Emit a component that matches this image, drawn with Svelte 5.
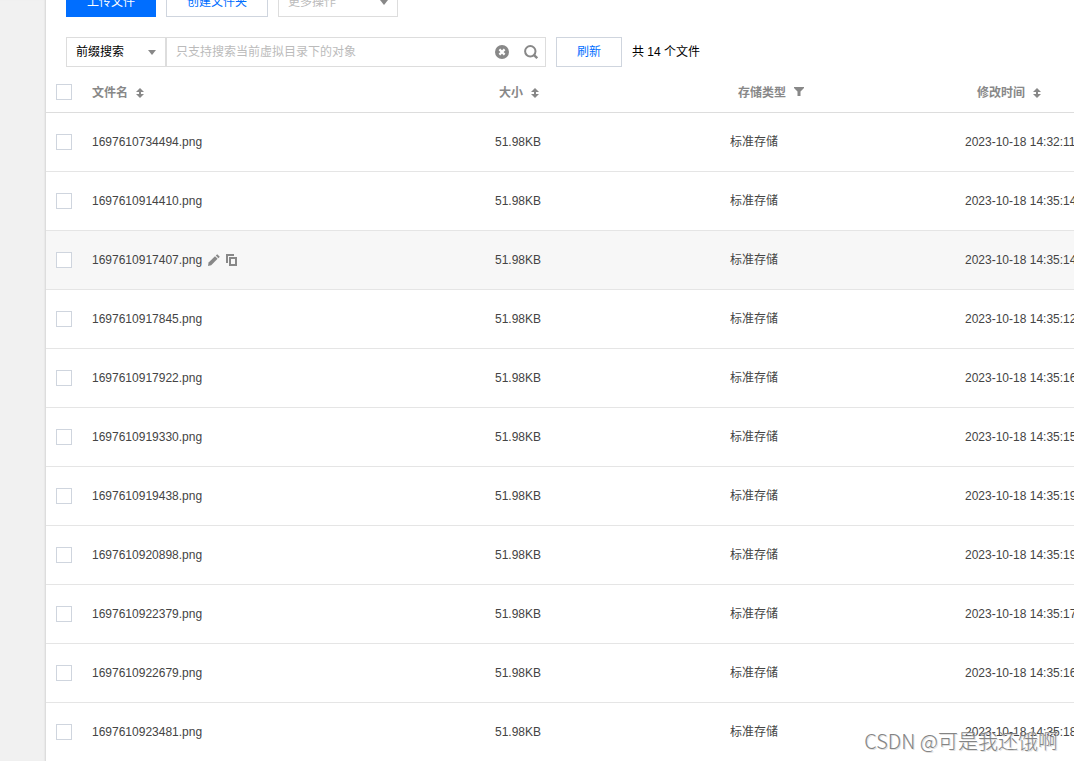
<script>
	let mode = $state("prefix");
	let keyword = $state("");

	const total = 14;
	const hovered = "1697610917407.png";

	const headers = [
		{ title: "文件名", icon: "sort" },
		{ title: "大小", icon: "sort" },
		{ title: "存储类型", icon: "filter" },
		{ title: "修改时间", icon: "sort" },
	];

	const files = [
		{ name: "1697610734494.png", time: "2023-10-18 14:32:11" },
		{ name: "1697610914410.png", time: "2023-10-18 14:35:14" },
		{ name: "1697610917407.png", time: "2023-10-18 14:35:14" },
		{ name: "1697610917845.png", time: "2023-10-18 14:35:12" },
		{ name: "1697610917922.png", time: "2023-10-18 14:35:16" },
		{ name: "1697610919330.png", time: "2023-10-18 14:35:15" },
		{ name: "1697610919438.png", time: "2023-10-18 14:35:19" },
		{ name: "1697610920898.png", time: "2023-10-18 14:35:19" },
		{ name: "1697610922379.png", time: "2023-10-18 14:35:17" },
		{ name: "1697610922679.png", time: "2023-10-18 14:35:16" },
		{ name: "1697610923481.png", time: "2023-10-18 14:35:18" },
	].map((f) => ({ ...f, size: "51.98KB", type: "标准存储" }));
</script>

{#snippet caret()}
	<svg class="caret" width="8" height="5" viewBox="0 0 8 5" aria-hidden="true">
		<path d="M0 0h8L4 5z" fill="#888" />
	</svg>
{/snippet}

{#snippet columns()}
	<colgroup>
		<col class="col-check" />
		<col />
		<col class="col-data" />
		<col class="col-data" />
		<col class="col-data" />
	</colgroup>
{/snippet}

<div class="page">
	<aside></aside>
	<main>
		<div class="actions">
			<button class="btn primary">上传文件</button>
			<button class="btn create">创建文件夹</button>
			<div class="select more">
				<select aria-label="更多操作" disabled>
					<option>更多操作</option>
				</select>
				{@render caret()}
			</div>
		</div>

		<div class="search">
			<div class="select">
				<select aria-label="搜索方式" bind:value={mode}>
					<option value="prefix">前缀搜索</option>
				</select>
				{@render caret()}
			</div>
			<div class="search-box">
				<input
					type="text"
					aria-label="搜索"
					placeholder="只支持搜索当前虚拟目录下的对象"
					bind:value={keyword}
				/>
				<button class="icon-btn" aria-label="清除" onclick={() => (keyword = "")}>
					<svg width="14" height="14" viewBox="0 0 14 14">
						<circle cx="7" cy="7" r="7" fill="#888" />
						<path d="M4.4 4.4l5.2 5.2M9.6 4.4L4.4 9.6" stroke="#fff" stroke-width="2.2" />
					</svg>
				</button>
				<button class="icon-btn" aria-label="搜索">
					<svg width="14" height="14" viewBox="0 0 14 14" fill="none" stroke="#888" stroke-width="2">
						<circle cx="6.3" cy="6.3" r="5.2" />
						<path d="M9.6 9.6l3.6 3.6" stroke-width="2.4" />
					</svg>
				</button>
			</div>
			<button class="btn refresh">刷新</button>
			<span class="total">共 {total} 个文件</span>
		</div>

		<table class="head">
			{@render columns()}
			<thead>
				<tr>
					<th class="check"><input type="checkbox" aria-label="全选" /></th>
					{#each headers as header}
						<th scope="col">
							<span class="cell">
								{header.title}
								{#if header.icon === "sort"}
									<svg width="8" height="10" viewBox="0 0 8 10" fill="#888" aria-hidden="true">
										<path d="M4 0l4 4H5v2h3L4 10 0 6h3V4H0z" />
									</svg>
								{:else}
									<svg class="filter" width="10" height="9" viewBox="0 0 10 9" fill="#888" aria-hidden="true">
										<path d="M0 0h10v1L6.5 4.5V9h-3V4.5L0 1z" />
									</svg>
								{/if}
							</span>
						</th>
					{/each}
				</tr>
			</thead>
		</table>

		<table>
			{@render columns()}
			<tbody>
				{#each files as file (file.name)}
					<tr class:hover={file.name === hovered}>
						<td class="check"><input type="checkbox" aria-label={file.name} /></td>
						<td>
							<span class="name">
								{file.name}
								{#if file.name === hovered}
									<button class="icon-btn" aria-label="重命名">
										<svg width="12" height="12" viewBox="0 0 12 12" fill="#888">
											<path d="M0 12l.6-3.4L7 2.2 9.6 4.8 3.2 11.2z" />
											<path d="M7.8 1.6L9.2 0.2l2.6 2.6-1.4 1.4z" />
										</svg>
									</button>
									<button class="icon-btn" aria-label="复制">
										<svg width="12" height="12" viewBox="0 0 12 12" fill="none" stroke="#888" stroke-width="2">
											<path d="M1 9V1h7" />
											<path d="M4 4h6v7H4z" />
										</svg>
									</button>
								{/if}
							</span>
						</td>
						<td>{file.size}</td>
						<td>{file.type}</td>
						<td>{file.time}</td>
					</tr>
				{/each}
			</tbody>
		</table>
	</main>
	<div class="watermark">CSDN @可是我还饿啊</div>
</div>

<style>
	:global(body) {
		margin: 0;
	}

	.page {
		position: relative;
		display: flex;
		height: 100vh;
		overflow: hidden;
		background: #fff;
		color: #444;
		font: 12px/18px "Liberation Sans", "Noto Sans CJK SC", sans-serif;
	}

	aside {
		flex: none;
		width: 46px;
		background: #f1f1f1;
		box-shadow: inset -1px 0 #ddd, inset -2px 0 1px #e8e8e8;
	}

	main {
		flex: 1;
		min-width: 0;
	}

	button,
	input,
	select {
		box-sizing: border-box;
		margin: 0;
		font: inherit;
	}

	/* the page is scrolled a little, so the first bar is partly out of view */
	.actions {
		display: flex;
		gap: 10px;
		margin-top: -13px;
		padding: 0 20px;
	}

	.search {
		display: flex;
		align-items: center;
		padding: 20px 20px 5px;
	}

	.btn {
		height: 30px;
		padding: 0 19px;
		border: 1px solid #cfd5de;
		background: #fff;
		color: #006eff;
		white-space: nowrap;
	}

	.primary {
		width: 90px;
		border-color: #006eff;
		background: #006eff;
		color: #fff;
	}

	.create {
		width: 102px;
	}

	.refresh {
		width: 66px;
		margin: 0 10px;
	}

	.total {
		color: #000;
	}

	.select {
		position: relative;
		width: 100px;
	}

	.more {
		width: 120px;
	}

	select {
		display: block;
		width: 100%;
		height: 30px;
		padding: 0 9px;
		appearance: none;
		border: 1px solid #ddd;
		border-radius: 0;
		background: #fff;
		color: #000;
	}

	select:disabled {
		color: #bbb;
		opacity: 1;
	}

	.caret {
		position: absolute;
		top: 13px;
		right: 10px;
		pointer-events: none;
	}

	.search-box {
		display: flex;
		align-items: center;
		gap: 15px;
		box-sizing: border-box;
		width: 380px;
		height: 30px;
		padding: 0 7px 0 9px;
		border: 1px solid #ddd;
	}

	.search-box input {
		flex: 1;
		min-width: 0;
		padding: 0;
		border: 0;
		outline: 0;
		background: none;
	}

	.search-box input::placeholder {
		color: #bbb;
	}

	.icon-btn {
		display: flex;
		padding: 0;
		border: 0;
		background: none;
	}

	table {
		width: 100%;
		min-width: 1144px;
		table-layout: fixed;
		border-collapse: separate;
		border-spacing: 0;
	}

	.head {
		min-width: 1160px;
	}

	.col-check {
		width: 36px;
	}

	.col-data {
		width: 235px;
	}

	.head .col-data {
		width: 239px;
	}

	th,
	td {
		box-sizing: border-box;
		height: 59px;
		padding: 0 10px;
		border-bottom: 1px solid #e5e5e5;
		text-align: left;
		white-space: nowrap;
	}

	th {
		height: 41px;
		border-color: #ddd;
		color: #888;
	}

	.hover td {
		background: #f7f7f7;
	}

	.cell {
		display: flex;
		align-items: center;
		gap: 8px;
		padding-top: 2px;
	}

	.filter {
		margin-bottom: 3px;
	}

	.name {
		display: flex;
		align-items: center;
		gap: 6px;
	}

	input[type="checkbox"] {
		display: block;
		width: 16px;
		height: 16px;
		appearance: none;
		border: 1px solid #cfd5de;
		background: #fff;
	}

	input[type="checkbox"]:checked {
		background: #006eff;
	}

	.watermark {
		position: absolute;
		right: 16px;
		bottom: 5px;
		color: #777;
		font: 300 20px/30px "Noto Sans CJK SC", sans-serif;
		text-shadow: 1px 1px #ddd;
		opacity: 0.9;
	}
</style>
